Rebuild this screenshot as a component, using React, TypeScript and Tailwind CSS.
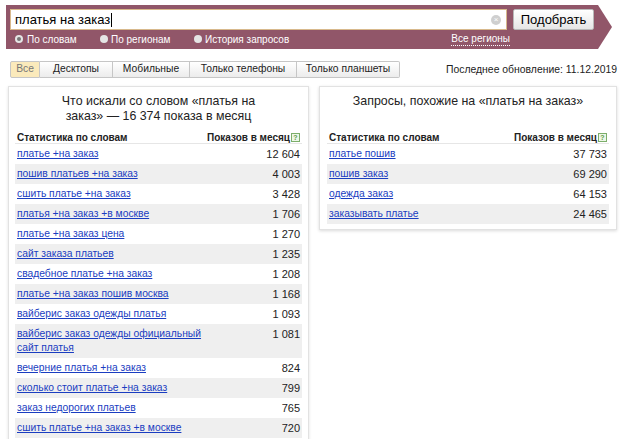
import React from "react";

const leftRows: [string, string][] = [
  ["платье +на заказ", "12 604"],
  ["пошив платьев +на заказ", "4 003"],
  ["сшить платье +на заказ", "3 428"],
  ["платья +на заказ +в москве", "1 706"],
  ["платье +на заказ цена", "1 270"],
  ["сайт заказа платьев", "1 235"],
  ["свадебное платье +на заказ", "1 208"],
  ["платье +на заказ пошив москва", "1 168"],
  ["вайберис заказ одежды платья", "1 093"],
  ["вайберис заказ одежды официальный сайт платья", "1 081"],
  ["вечерние платья +на заказ", "824"],
  ["сколько стоит платье +на заказ", "799"],
  ["заказ недорогих платьев", "765"],
  ["сшить платье +на заказ +в москве", "720"],
];

const rightRows: [string, string][] = [
  ["платье пошив", "37 733"],
  ["пошив заказ", "69 290"],
  ["одежда заказ", "64 153"],
  ["заказывать платье", "24 465"],
];

const tabs = [
  { name: "Все", w: "w-[30px]" },
  { name: "Десктопы", w: "w-[73px]" },
  { name: "Мобильные", w: "w-[77px]" },
  { name: "Только телефоны", w: "w-[107px]" },
  { name: "Только планшеты", w: "w-[103px]" },
];

function HelpIcon() {
  return (
    <span className="ml-[1px] inline-flex h-[9px] w-[9px] items-center justify-center border border-[#7cae6a] bg-[#eef7e8] text-[7px] leading-none text-[#5a9a45]">
      ?
    </span>
  );
}

function StatTable({ rows }: { rows: [string, string][] }) {
  return (
    <div>
      <div className="flex items-end justify-between border-b border-[#e6e6e6] px-[2px] text-[10px] font-bold leading-[11px] text-[#222]">
        <span>Статистика по словам</span>
        <span className="flex items-center">
          Показов в месяц
          <HelpIcon />
        </span>
      </div>
      {rows.map(([q, n], i) => (
        <div
          key={q}
          className={`flex items-start justify-between px-[2px] py-[3px] ${i % 2 === 1 ? "bg-[#efefef]" : "bg-white"}`}
        >
          <a href="#" className="w-[200px] text-[10.3px] leading-[14px] text-[#1a3dc1] underline">
            {q}
          </a>
          <span className="text-[11px] leading-[14px] text-[#222]">{n}</span>
        </div>
      ))}
    </div>
  );
}

export default function App() {
  return (
    <div className="h-[439px] w-[628px] overflow-hidden bg-white font-['Liberation_Sans',Arial,sans-serif] text-[#222]">
      {/* Search bar */}
      <div className="ml-[6px] mt-[5px] h-[44px] w-[606px] bg-[#915669] pl-[4px] pt-[4px] [clip-path:polygon(0_0,calc(100%_-_14px)_0,100%_50%,calc(100%_-_14px)_100%,0_100%)]">
        <div className="flex items-center">
          <div className="flex h-[21px] w-[497px] items-center border border-[#d8b98c] bg-white pl-[4px] pr-[5px]">
            <span className="text-[13px] leading-none text-black">платья на заказ</span>
            <span className="ml-[1px] h-[14px] w-[1px] bg-black" />
            <span className="ml-auto flex h-[10px] w-[10px] items-center justify-center rounded-full bg-[#cfcfcf] text-[8px] leading-none text-white">
              ×
            </span>
          </div>
          <button className="ml-[6px] h-[21px] w-[81px] rounded-[2px] border border-[#b9b9b9] bg-gradient-to-b from-white to-[#e6e6e6] text-[13px] leading-none text-black">
            Подобрать
          </button>
        </div>
        <div className="mt-[2px] flex items-center text-[10px] leading-[13px] text-white">
          <span className="ml-[5px] flex w-[85px] items-center">
            <span className="flex h-[8px] w-[8px] items-center justify-center rounded-full bg-[#e5e5e5]">
              <span className="h-[4px] w-[4px] rounded-full bg-[#777]" />
            </span>
            <span className="ml-[4px]">По словам</span>
          </span>
          <span className="flex w-[94px] items-center">
            <span className="h-[8px] w-[8px] rounded-full bg-[#e5e5e5]" />
            <span className="ml-[3px]">По регионам</span>
          </span>
          <span className="flex items-center">
            <span className="h-[8px] w-[8px] rounded-full bg-[#e5e5e5]" />
            <span className="ml-[3px]">История запросов</span>
          </span>
          <span className="ml-auto mr-[102px] border-b border-dotted border-white">Все регионы</span>
        </div>
      </div>

      {/* Tabs */}
      <div className="mt-[12px] flex items-center pl-[10px] pr-[11px]">
        <div className="flex">
          {tabs.map((t, i) => (
            <span
              key={t.name}
              className={`flex h-[17px] items-center justify-center border border-[#c6c6c6] text-[10.3px] leading-none ${t.w} ${
                i === 0
                  ? "rounded-l-[2px] bg-[#fbeabb] text-[#777]"
                  : "border-l-0 bg-gradient-to-b from-white to-[#ececec] text-[#222]"
              } ${i === tabs.length - 1 ? "rounded-r-[2px]" : ""}`}
            >
              {t.name}
            </span>
          ))}
        </div>
        <span className="ml-auto text-[10.4px] text-[#222]">Последнее обновление: 11.12.2019</span>
      </div>

      {/* Panels */}
      <div className="mt-[8px] flex items-start pl-[8px]">
        <div className="h-[360px] w-[301px] border border-[#e2e2e2] bg-white px-[6px] shadow-[0_1px_3px_rgba(0,0,0,0.12)]">
          <div className="mx-auto mt-[7px] h-[38px] w-[210px] text-center text-[12.4px] leading-[15px]">
            Что искали со словом «платья на заказ» — 16 374 показа в месяц
          </div>
          <StatTable rows={leftRows} />
        </div>
        <div className="ml-[10px] w-[298px] border border-[#e2e2e2] bg-white px-[7px] pb-[5px] shadow-[0_1px_3px_rgba(0,0,0,0.15)]">
          <div className="mt-[7px] h-[38px] text-center text-[12.4px] leading-[15px]">
            Запросы, похожие на «платья на заказ»
          </div>
          <StatTable rows={rightRows} />
        </div>
      </div>
    </div>
  );
}
